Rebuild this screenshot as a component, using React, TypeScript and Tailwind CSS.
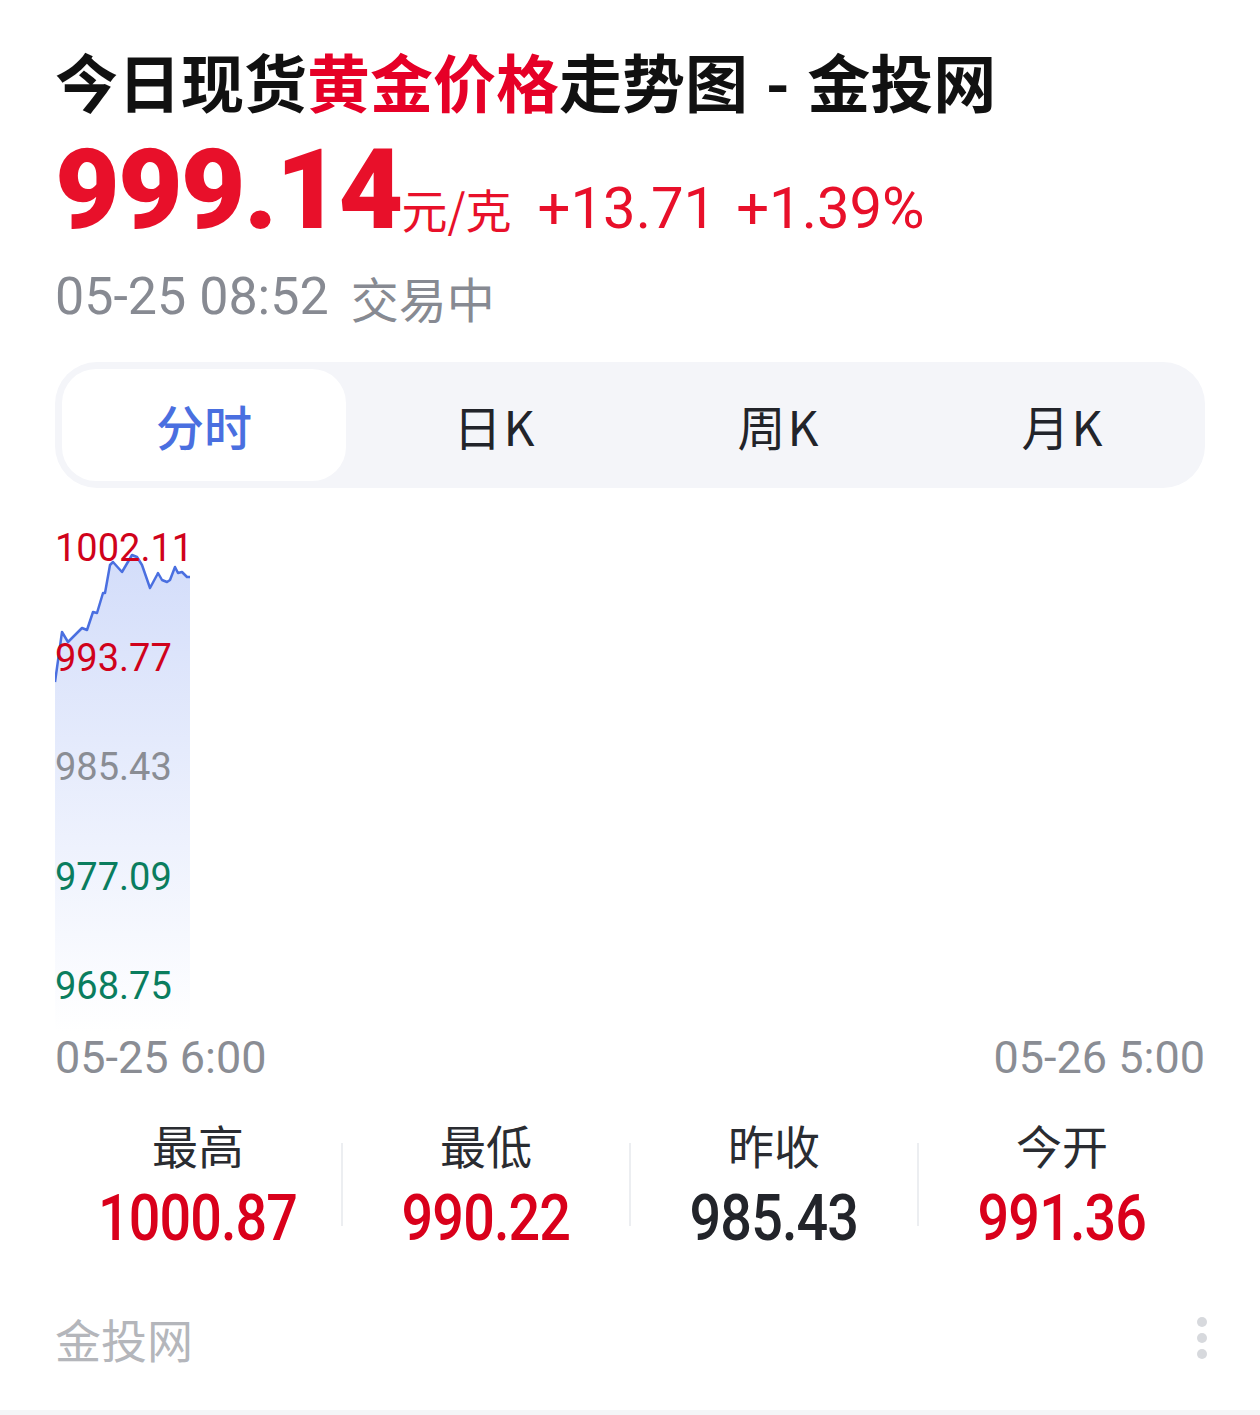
import React from "react";

const cjk = { fontFamily: '"Noto Sans CJK SC", "Noto Sans", sans-serif' };
const num = { fontFamily: 'Roboto, "Noto Sans CJK SC", sans-serif' };

// page coordinates of the intraday line, offset to the chart box below
const raw: [number, number][] = [
  [55, 682], [62, 632], [68, 642], [75, 635], [82, 628], [87, 630], [93, 612], [97, 613],
  [103, 593], [105, 593], [110, 565], [113, 562], [122, 572], [132, 555], [137, 557],
  [142, 565], [150, 588], [157, 575], [158, 573], [162, 580], [167, 582], [170, 580],
  [175, 567], [178, 573], [182, 572], [187, 577], [190, 577],
];
const pts = raw.map(([x, y]) => [x - 55, y - 528] as [number, number]);
const linePath = pts.map(([x, y], i) => `${i === 0 ? "M" : "L"}${x} ${y}`).join(" ");
const areaPath = `${linePath} L${pts[pts.length - 1][0]} 504 L0 504 Z`;

const axisLabels = [
  { v: "1002.11", c: "text-[#d0021b]" },
  { v: "993.77", c: "text-[#d0021b]" },
  { v: "985.43", c: "text-[#8a8d94]" },
  { v: "977.09", c: "text-[#0a7d5e]" },
  { v: "968.75", c: "text-[#0a7d5e]" },
];

const stats = [
  { label: "最高", value: "1000.87", c: "text-[#d9001b]" },
  { label: "最低", value: "990.22", c: "text-[#d9001b]" },
  { label: "昨收", value: "985.43", c: "text-[#22242a]" },
  { label: "今开", value: "991.36", c: "text-[#d9001b]" },
];

const tabs = ["分时", "日K", "周K", "月K"];

export default function App() {
  return (
    <div className="flex h-[1415px] w-[1260px] flex-col bg-white">
      <div className="px-[55px]">
        <div className="mt-[44px] flex h-[70px] items-center text-[63px] font-bold leading-none text-[#111111]" style={cjk}>
          今日现货<span className="text-[#e60027]">黄金价格</span>走势图<span className="mx-[18px]">-</span>金投网
        </div>

        <div className="mt-[20px] flex h-[112px] items-baseline text-[#e8102a]">
          <span className="text-[112px] font-black leading-none tracking-[-2px]" style={num}>999.14</span>
          <span className="text-[46px] leading-none" style={cjk}>元/克</span>
          <span className="ml-[26px] text-[58px] leading-none" style={num}>+13.71</span>
          <span className="ml-[20px] text-[58px] leading-none" style={num}>+1.39%</span>
        </div>

        <div className="mt-[21px] flex h-[60px] items-center text-[52px] leading-none text-[#878a92]" style={num}>
          05-25 08:52
          <span className="ml-[22px] text-[48px]" style={cjk}>交易中</span>
        </div>

        <div className="mt-[35px] grid h-[126px] grid-cols-4 rounded-[42px] bg-[#f4f5f9] p-[7px]">
          {tabs.map((t, i) => (
            <div
              key={t}
              className={
                i === 0
                  ? "flex items-center justify-center rounded-[34px] bg-white text-[48px] font-medium text-[#4a6fe0]"
                  : "flex items-center justify-center pl-[14px] text-[48px] tracking-[2px] text-[#22242a]"
              }
              style={cjk}
            >
              {t}
            </div>
          ))}
        </div>

        <div className="relative mt-[40px] h-[504px]">
          <svg className="absolute inset-0" width="1150" height="504" viewBox="0 0 1150 504">
            <defs>
              <linearGradient id="fill" x1="0" y1="0" x2="0" y2="1">
                <stop offset="0%" stopColor="#d3ddfa" />
                <stop offset="100%" stopColor="#ffffff" />
              </linearGradient>
            </defs>
            <path d={areaPath} fill="url(#fill)" />
            <path d={linePath} fill="none" stroke="#4a6fe0" strokeWidth="2.5" strokeLinejoin="round" />
          </svg>
          <div className="relative flex flex-col gap-[69.5px]">
            {axisLabels.map((l) => (
              <div key={l.v} className={`flex h-[40px] items-center text-[38px] leading-none ${l.c}`} style={num}>
                {l.v}
              </div>
            ))}
          </div>
        </div>

        <div className="flex h-[50px] items-center justify-between text-[45px] leading-none text-[#8a8d94]" style={num}>
          <span>05-25 6:00</span>
          <span>05-26 5:00</span>
        </div>

        <div className="mt-[32px] flex h-[140px] items-center">
          {stats.map((s, i) => (
            <React.Fragment key={s.label}>
              {i > 0 && <div className="h-[83px] w-[2px] bg-[#eceef1]" />}
              <div className="flex flex-1 flex-col items-center gap-[20px]">
                <div className="flex h-[50px] items-center text-[46px] leading-none text-[#2a2c31]" style={cjk}>
                  {s.label}
                </div>
                <div
                  className={`flex h-[60px] scale-x-[0.87] items-center text-[64px] font-medium leading-none tracking-[-1px] ${s.c}`}
                  style={num}
                >
                  {s.value}
                </div>
              </div>
            </React.Fragment>
          ))}
        </div>

        <div className="mt-[54px] flex h-[60px] items-center justify-between">
          <span className="text-[46px] leading-none text-[#b4b6bb]" style={cjk}>金投网</span>
          <div className="mr-[-2px] flex flex-col gap-[6px]">
            <span className="h-[10px] w-[10px] rounded-full bg-[#d7d9dd]" />
            <span className="h-[10px] w-[10px] rounded-full bg-[#d7d9dd]" />
            <span className="h-[10px] w-[10px] rounded-full bg-[#d7d9dd]" />
          </div>
        </div>
      </div>

      <div className="mt-auto h-[5px] bg-[#f4f5f7]" />
    </div>
  );
}
